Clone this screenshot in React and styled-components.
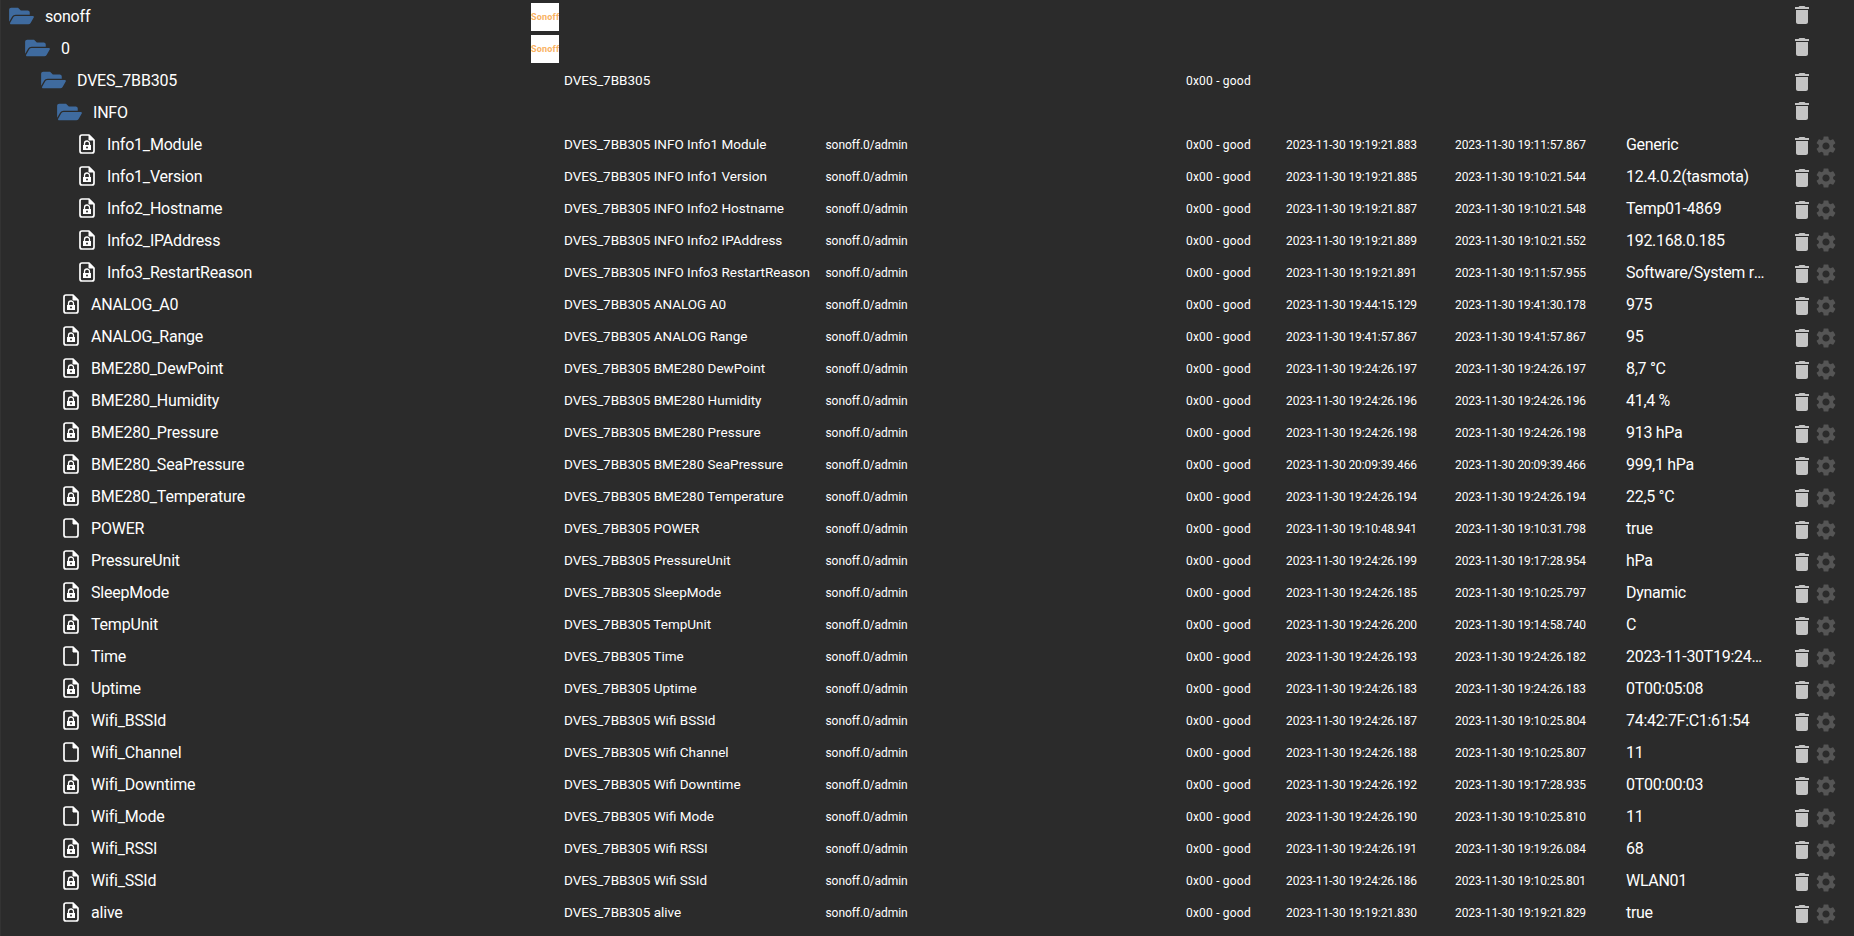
import React from 'react';
import styled, { createGlobalStyle } from 'styled-components';
import { FaFolderOpen } from 'react-icons/fa';
import { MdDelete, MdSettings } from 'react-icons/md';

const Global = createGlobalStyle`
  html, body { margin: 0; padding: 0; height: 100%; background: #2b2b2b; overflow: hidden; }
  body { font-family: Roboto, "Liberation Sans", sans-serif; color: #fff; }
`;

const Page = styled.div`
  height: 936px;
  overflow: hidden;
  background: #2b2b2b;
  border-left: 1px solid #333;
`;

const Row = styled.div`
  display: grid;
  grid-template-columns: 530px 33px 261px 361px 100px 169px 170px 165px 64px;
  height: 32px;
  align-items: center;
  white-space: nowrap;
`;

const NameCell = styled.div`
  display: flex;
  align-items: center;
  padding-left: ${p => p.$left}px;
  font-size: 16px;
  letter-spacing: -0.2px;
`;

const FolderIcon = styled(FaFolderOpen)`
  width: 25px;
  height: 22px;
  color: #3f6b9f;
  margin-right: 11px;
  flex: none;
`;

const FileGlyph = styled.svg`
  width: 16px;
  height: 20px;
  margin-right: 12px;
  flex: none;
`;

const LogoCell = styled.div`
  height: 32px;
  padding-top: 3px;
  box-sizing: border-box;
`;

const Logo = styled.div`
  width: 28px;
  height: 28px;
  background: #fff;
  color: #f9b262;
  font-size: 9px;
  font-weight: 700;
  line-height: 29px;
  letter-spacing: 0.2px;
  text-align: center;
  overflow: hidden;
`;

const Topic = styled.div`
  font-size: 13.5px;
  overflow: hidden;
`;

const Role = styled.div`
  font-size: 12px;
  padding-top: 2px;
  padding-left: 0.5px;
  letter-spacing: -0.07px;
`;

const Status = styled.div`
  font-size: 12px;
  padding-top: 2px;
  letter-spacing: 0.2px;
`;

const Stamp = styled.div`
  font-size: 12px;
  padding-top: 2px;
  letter-spacing: -0.1px;
`;

const Value = styled.div`
  font-size: 16px;
  padding-left: 1px;
  padding-right: 25px;
  letter-spacing: -0.3px;
  overflow: hidden;
  text-overflow: ellipsis;
`;

const Actions = styled.div`
  display: flex;
  height: 32px;
  padding-top: ${p => p.$drop}px;
  box-sizing: border-box;
`;

const Trash = styled(MdDelete)`
  width: 24px;
  height: 24px;
  color: #c4c4c4;
  flex: none;
`;

const Gear = styled(MdSettings)`
  width: 24px;
  height: 24px;
  color: #555;
  flex: none;
`;

const FileIcon = ({ locked }) => (
  <FileGlyph viewBox="0 0 16 20" fill="none">
    <path d="M3 1 H10 L15 6 V17 Q15 19 13 19 H3 Q1 19 1 17 V3 Q1 1 3 1 Z" stroke="#fff" strokeWidth="1.7" strokeLinejoin="round" />
    <path d="M10 1 V6 H15" fill="#fff" stroke="#fff" strokeWidth="1" strokeLinejoin="round" />
    {locked && (
      <>
        <path d="M5.5 11 V9.5 A2.5 2.5 0 0 1 10.5 9.5 V11" stroke="#fff" strokeWidth="1.3" />
        <path d="M4 11 H12 V16 H4 Z" fill="#fff" />
        <circle cx="8" cy="13.5" r="1" fill="#2b2b2b" />
      </>
    )}
  </FileGlyph>
);

const P = 'DVES_7BB305';
const ROLE = 'sonoff.0/admin';
const D = '2023-11-30 ';
const files = [
  [4, 'Info1_Module', 'INFO Info1 Module', '19:19:21.883', '19:11:57.867', 'Generic', 1],
  [4, 'Info1_Version', 'INFO Info1 Version', '19:19:21.885', '19:10:21.544', '12.4.0.2(tasmota)', 1],
  [4, 'Info2_Hostname', 'INFO Info2 Hostname', '19:19:21.887', '19:10:21.548', 'Temp01-4869', 1],
  [4, 'Info2_IPAddress', 'INFO Info2 IPAddress', '19:19:21.889', '19:10:21.552', '192.168.0.185', 1],
  [4, 'Info3_RestartReason', 'INFO Info3 RestartReason', '19:19:21.891', '19:11:57.955', 'Software/System restart', 1],
  [3, 'ANALOG_A0', 'ANALOG A0', '19:44:15.129', '19:41:30.178', '975', 1],
  [3, 'ANALOG_Range', 'ANALOG Range', '19:41:57.867', '19:41:57.867', '95', 1],
  [3, 'BME280_DewPoint', 'BME280 DewPoint', '19:24:26.197', '19:24:26.197', '8,7 °C', 1],
  [3, 'BME280_Humidity', 'BME280 Humidity', '19:24:26.196', '19:24:26.196', '41,4 %', 1],
  [3, 'BME280_Pressure', 'BME280 Pressure', '19:24:26.198', '19:24:26.198', '913 hPa', 1],
  [3, 'BME280_SeaPressure', 'BME280 SeaPressure', '20:09:39.466', '20:09:39.466', '999,1 hPa', 1],
  [3, 'BME280_Temperature', 'BME280 Temperature', '19:24:26.194', '19:24:26.194', '22,5 °C', 1],
  [3, 'POWER', 'POWER', '19:10:48.941', '19:10:31.798', 'true', 0],
  [3, 'PressureUnit', 'PressureUnit', '19:24:26.199', '19:17:28.954', 'hPa', 1],
  [3, 'SleepMode', 'SleepMode', '19:24:26.185', '19:10:25.797', 'Dynamic', 1],
  [3, 'TempUnit', 'TempUnit', '19:24:26.200', '19:14:58.740', 'C', 1],
  [3, 'Time', 'Time', '19:24:26.193', '19:24:26.182', '2023-11-30T19:24:26', 0],
  [3, 'Uptime', 'Uptime', '19:24:26.183', '19:24:26.183', '0T00:05:08', 1],
  [3, 'Wifi_BSSId', 'Wifi BSSId', '19:24:26.187', '19:10:25.804', '74:42:7F:C1:61:54', 1],
  [3, 'Wifi_Channel', 'Wifi Channel', '19:24:26.188', '19:10:25.807', '11', 0],
  [3, 'Wifi_Downtime', 'Wifi Downtime', '19:24:26.192', '19:17:28.935', '0T00:00:03', 1],
  [3, 'Wifi_Mode', 'Wifi Mode', '19:24:26.190', '19:10:25.810', '11', 0],
  [3, 'Wifi_RSSI', 'Wifi RSSI', '19:24:26.191', '19:19:26.084', '68', 1],
  [3, 'Wifi_SSId', 'Wifi SSId', '19:24:26.186', '19:10:25.801', 'WLAN01', 1],
  [3, 'alive', 'alive', '19:19:21.830', '19:19:21.829', 'true', 1],
];

const FolderRow = ({ depth, name, logo, topic, status, drop }) => (
  <Row>
    <NameCell $left={8 + 16 * depth}>
      <FolderIcon />
      <span>{name}</span>
    </NameCell>
    <LogoCell>{logo && <Logo>Sonoff</Logo>}</LogoCell>
    <Topic>{topic}</Topic>
    <Role />
    <Status>{status}</Status>
    <Stamp />
    <Stamp />
    <Value />
    <Actions $drop={drop}>
      <Trash />
    </Actions>
  </Row>
);

export default function App() {
  return (
    <Page>
      <Global />
      <FolderRow depth={0} name="sonoff" logo drop={3} />
      <FolderRow depth={1} name="0" logo drop={3} />
      <FolderRow depth={2} name={P} topic={P} status="0x00 - good" drop={6} />
      <FolderRow depth={3} name="INFO" drop={3} />
      {files.map(([depth, name, topic, ts, lc, value, locked]) => (
        <Row key={name}>
          <NameCell $left={14 + 16 * depth}>
            <FileIcon locked={!!locked} />
            <span>{name}</span>
          </NameCell>
          <LogoCell />
          <Topic>{P} {topic}</Topic>
          <Role>{ROLE}</Role>
          <Status>0x00 - good</Status>
          <Stamp>{D + ts}</Stamp>
          <Stamp>{D + lc}</Stamp>
          <Value>{value}</Value>
          <Actions $drop={6}>
            <Trash />
            <Gear />
          </Actions>
        </Row>
      ))}
    </Page>
  );
}
